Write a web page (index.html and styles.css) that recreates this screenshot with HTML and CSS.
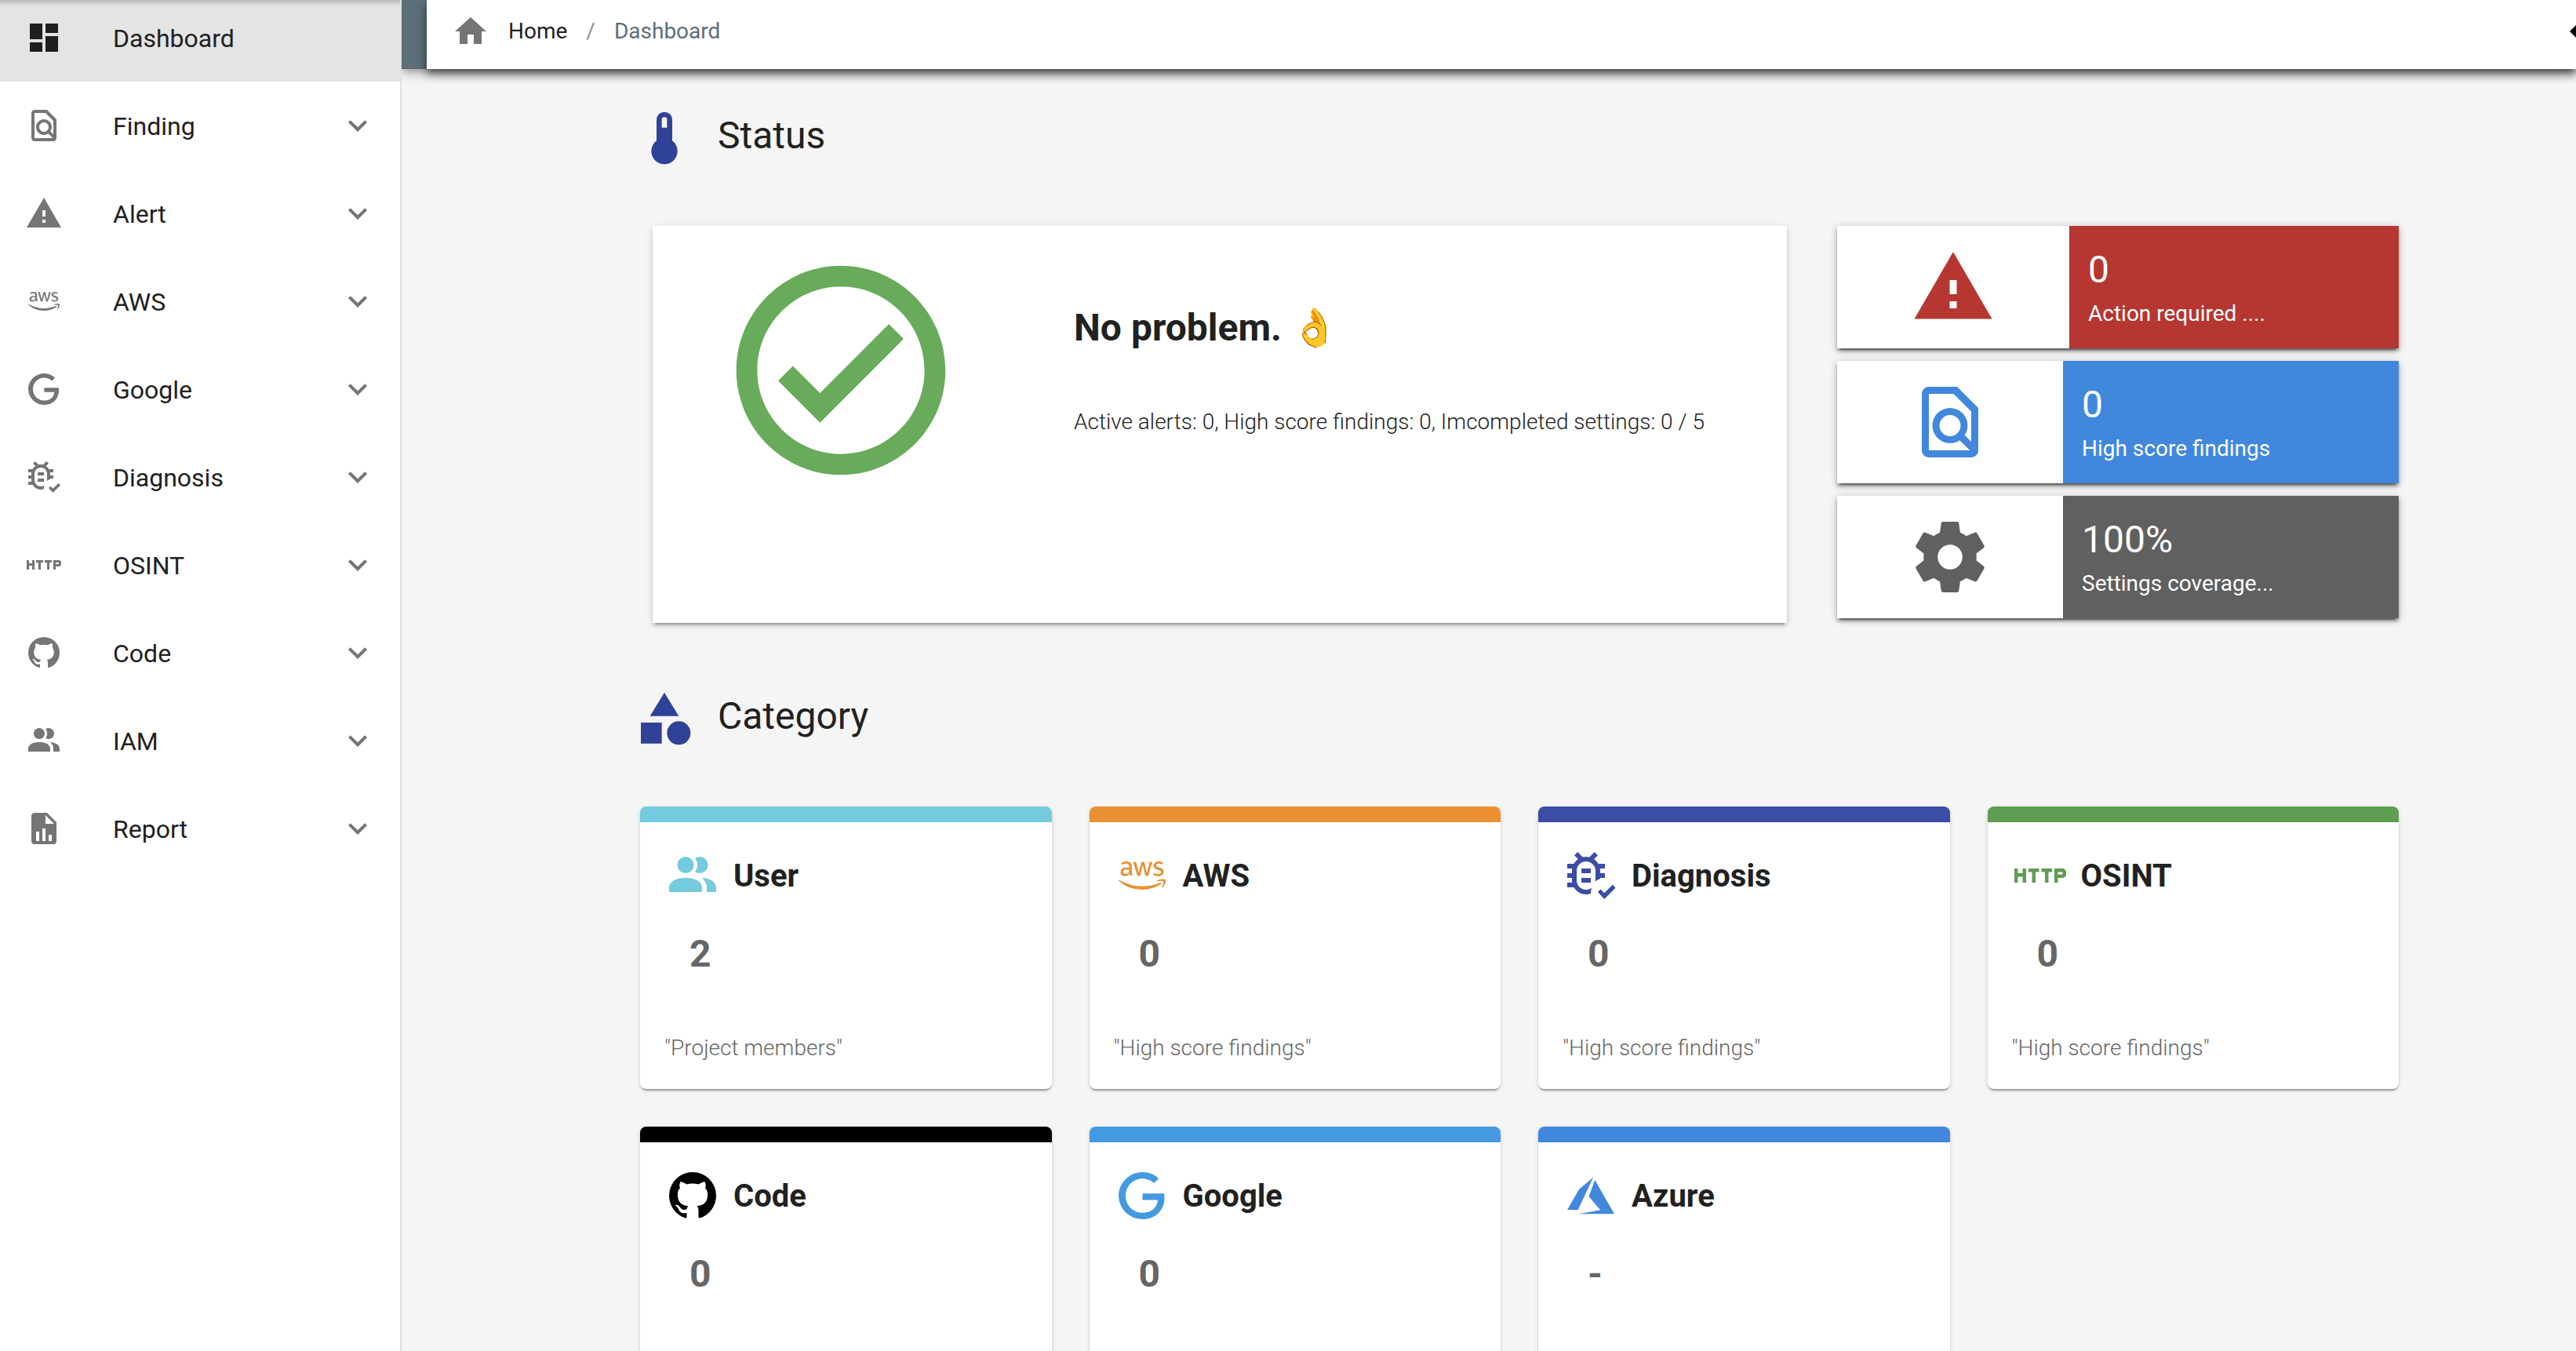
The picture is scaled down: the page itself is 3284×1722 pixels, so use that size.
FILE: index.html
```html
<!DOCTYPE html>
<html lang="en">
<head>
<meta charset="utf-8">
<meta name="viewport" content="width=device-width, initial-scale=1">
<title>Dashboard</title>
<link rel="stylesheet" href="styles.css">
</head>
<body>
<svg class="sprite" aria-hidden="true">
  <symbol id="i-dashboard" viewBox="0 0 24 24"><path d="M3 13h8V3H3v10zm0 8h8v-6H3v6zm10 0h8V11h-8v10zm0-18v6h8V3h-8z"/></symbol>
  <symbol id="i-finding" viewBox="0 0 24 24"><path d="M20 8l-6-6H6c-1.1 0-1.99.9-1.99 2L4 20c0 1.1.89 2 1.99 2H18c1.1 0 2-.9 2-2V8zM6 4h7l5 5v8.58l-1.84-1.84c1.28-1.94 1.07-4.57-.64-6.28C14.55 8.49 13.28 8 12 8c-1.28 0-2.55.49-3.53 1.46-1.95 1.95-1.95 5.11 0 7.05.97.97 2.25 1.46 3.53 1.46.96 0 1.92-.28 2.75-.83L17.6 20H6V4zm8.11 11.1c-.56.56-1.31.88-2.11.88s-1.55-.31-2.11-.88c-.56-.56-.88-1.31-.88-2.11s.31-1.55.88-2.11c.56-.57 1.31-.88 2.11-.88s1.55.31 2.11.88c.56.56.88 1.31.88 2.11s-.31 1.55-.88 2.11z"/></symbol>
  <symbol id="i-warning" viewBox="0 0 24 24"><path d="M1 21h22L12 2 1 21zm12-3h-2v-2h2v2zm0-4h-2v-4h2v4z"/></symbol>
  <symbol id="i-aws" viewBox="-64 -128 768 768"><path d="M180.41 203.01c-.72 22.65 10.6 32.68 10.88 39.05a8.164 8.164 0 0 1-4.1 6.27l-12.8 8.96a10.66 10.66 0 0 1-5.63 1.92c-.43-.02-8.19 1.83-20.48-25.61a78.608 78.608 0 0 1-62.61 29.45c-16.28.89-60.4-9.24-58.13-56.21-1.59-38.28 34.06-62.06 70.93-60.05 7.1.02 21.6.37 46.99 6.27v-15.62c2.69-26.46-14.7-46.99-44.81-43.91-2.4.01-19.4-.5-45.84 10.11-7.36 3.38-8.3 2.82-10.75 2.82-7.41 0-4.36-21.48-2.94-24.2 5.21-6.4 35.86-18.35 65.94-18.18a76.857 76.857 0 0 1 55.69 17.28 70.285 70.285 0 0 1 17.67 52.36l-.01 69.29zM93.99 235.4c32.43-.47 46.16-19.97 49.29-30.47 2.46-10.05 2.05-16.41 2.05-27.4-9.67-2.32-23.59-4.85-39.56-4.87-15.15-1.14-42.82 5.63-41.74 32.26-1.24 16.79 11.12 31.4 29.96 30.48zm170.92 23.05c-7.86.72-11.52-4.86-12.68-10.37l-49.8-164.65c-.97-2.78-1.61-5.65-1.92-8.58a4.61 4.61 0 0 1 3.86-5.25c.24-.04-2.13 0 22.25 0 8.78-.88 11.64 6.03 12.55 10.37l35.72 140.83 33.16-140.83c.53-3.22 2.94-11.07 12.8-10.24h17.16c2.17-.18 11.11-.5 12.68 10.37l33.42 142.63L420.98 80.1c.48-2.18 2.72-11.37 12.68-10.37h19.72c.85-.13 6.15-.81 5.25 8.58-.43 1.85 3.41-10.66-52.75 169.9-1.15 5.51-4.82 11.09-12.68 10.37h-18.69c-10.94 1.15-12.51-9.66-12.68-10.75L328.67 110.7l-32.78 136.99c-.16 1.09-1.73 11.9-12.68 10.75h-18.3zm273.48 5.63c-5.88.01-33.92-.3-57.36-12.29a12.802 12.802 0 0 1-7.81-11.91v-10.75c0-8.45 6.2-6.9 8.83-5.89 10.04 4.06 16.48 7.14 28.81 9.6 36.65 7.53 52.77-2.3 56.72-4.48 13.15-7.81 14.19-25.68 5.25-34.95-10.48-8.79-15.48-9.12-53.13-21-4.64-1.29-43.7-13.61-43.79-52.36-.61-28.24 25.05-56.18 69.52-55.95 12.67-.01 46.43 4.13 55.57 15.62 1.35 2.09 2.02 4.55 1.92 7.04v10.11c0 4.44-1.62 6.66-4.87 6.66-7.71-.86-21.39-11.17-49.16-10.75-6.89-.36-39.89.91-38.41 24.97-.43 18.96 26.61 26.07 29.7 26.89 36.46 10.97 48.65 12.79 63.12 29.58 17.14 22.25 7.9 48.3 4.35 55.44-19.08 37.49-68.42 34.44-69.26 34.42zm40.2 104.86c-70.03 51.72-171.69 79.25-258.49 79.25A469.127 469.127 0 0 1 2.83 327.46c-6.53-5.89-.77-13.96 7.17-9.47a637.37 637.37 0 0 0 316.88 84.12 630.22 630.22 0 0 0 241.59-49.55c11.78-5 21.77 7.8 10.12 16.38zm29.19-33.29c-8.96-11.52-59.28-5.38-81.81-2.69-6.79.77-7.94-5.12-1.79-9.47 40.07-28.17 105.88-20.1 113.44-10.63 7.55 9.47-2.05 75.41-39.56 106.91-5.76 4.87-11.27 2.3-8.71-4.1 8.44-21.25 27.39-68.49 18.43-80.02z"/></symbol>
  <symbol id="i-google" viewBox="0 0 24 24"><path d="M21.35 11.1h-9.17v2.73h6.51c-.33 3.81-3.5 5.44-6.5 5.44C8.36 19.27 5 16.25 5 12c0-4.1 3.2-7.27 7.2-7.27 3.09 0 4.9 1.97 4.9 1.97L19 4.72S16.56 2 12.1 2C6.42 2 2.03 6.8 2.03 12c0 5.05 4.13 10 10.22 10 5.35 0 9.25-3.67 9.25-9.09 0-1.15-.15-1.81-.15-1.81z"/></symbol>
  <symbol id="i-diagnosis" viewBox="0 0 24 24"><path d="M18 7H15.19C14.74 6.2 14.12 5.5 13.37 5L15 3.41L13.59 2L11.42 4.17C10.96 4.06 10.5 4 10 4S9.05 4.06 8.59 4.17L6.41 2L5 3.41L6.62 5C5.87 5.5 5.26 6.21 4.81 7H2V9H4.09C4.03 9.33 4 9.66 4 10V11H2V13H4V14C4 14.34 4.03 14.67 4.09 15H2V17H4.81C6.26 19.5 9.28 20.61 12 19.65C12 19.1 12.1 18.3 12.35 17.24C11.65 17.74 10.84 18 10 18C7.79 18 6 16.21 6 14V10C6 7.79 7.79 6 10 6S14 7.79 14 10V14C14 14.19 14 14.39 13.95 14.58C14.54 14 15.24 13.59 16 13.34V13H18V11H16V10C16 9.66 15.97 9.33 15.91 9H18V7zM12 9H8V11H12V9zM12 13H8V15H12V13zM17.75 22L15 19l1.16-1.16 1.59 1.59 3.59-3.59 1.16 1.41z"/></symbol>
  <symbol id="i-http" viewBox="0 0 24 24"><path d="M4.5 11h-2V9H1v6h1.5v-2.5h2V15H6V9H4.5v2zm2.5-.5h1.5V15H10v-4.5h1.5V9H7v1.5zm5.5 0H14V15h1.5v-4.5H17V9h-4.5v1.5zm9-1.5H18v6h1.5v-2h2c.8 0 1.5-.7 1.5-1.5v-1c0-.8-.7-1.5-1.5-1.5zm0 2.5h-2v-1h2v1z"/></symbol>
  <symbol id="i-github" viewBox="0 0 24 24"><path d="M12 2A10 10 0 0 0 2 12c0 4.42 2.87 8.17 6.84 9.5.5.08.66-.23.66-.5v-1.69c-2.77.6-3.36-1.34-3.36-1.34-.46-1.16-1.11-1.47-1.11-1.47-.91-.62.07-.6.07-.6 1 .07 1.53 1.03 1.53 1.03.87 1.52 2.34 1.07 2.91.83.09-.65.35-1.09.63-1.34-2.22-.25-4.55-1.11-4.55-4.92 0-1.11.38-2 1.03-2.71-.1-.25-.45-1.29.1-2.64 0 0 .84-.27 2.75 1.02.79-.22 1.65-.33 2.5-.33s1.71.11 2.5.33c1.91-1.29 2.75-1.02 2.75-1.02.55 1.35.2 2.39.1 2.64.65.71 1.03 1.6 1.03 2.71 0 3.82-2.34 4.66-4.57 4.91.36.31.69.92.69 1.85V21c0 .27.16.59.67.5C19.14 20.16 22 16.42 22 12A10 10 0 0 0 12 2z"/></symbol>
  <symbol id="i-people" viewBox="0 0 24 24"><path d="M16 17v2H2v-2s0-4 7-4 7 4 7 4m-3.5-9.5A3.5 3.5 0 1 0 9 11a3.5 3.5 0 0 0 3.5-3.5m3.44 5.5A5.32 5.32 0 0 1 18 17v2h4v-2s0-3.63-6.06-4M15 4a3.39 3.39 0 0 0-1.93.59 5 5 0 0 1 0 5.82A3.39 3.39 0 0 0 15 11a3.5 3.5 0 0 0 0-7z"/></symbol>
  <symbol id="i-report" viewBox="0 0 24 24"><path d="M13 9h5.5L13 3.5V9M6 2h8l6 6v12a2 2 0 0 1-2 2H6a2 2 0 0 1-2-2V4c0-1.11.89-2 2-2m1 18h2v-6H7v6m4 0h2v-8h-2v8m4 0h2v-4h-2v4z"/></symbol>
  <symbol id="i-expand" viewBox="0 0 24 24"><path d="M16.59 8.59L12 13.17 7.41 8.59 6 10l6 6 6-6z"/></symbol>
  <symbol id="i-home" viewBox="0 0 24 24"><path d="M10 20v-6h4v6h5v-8h3L12 3 2 12h3v8z"/></symbol>
  <symbol id="i-thermometer" viewBox="0 0 24 24"><path d="M15 13V5a3 3 0 0 0-6 0v8a5 5 0 1 0 6 0m-3-9a1 1 0 0 1 1 1v3h-2V5a1 1 0 0 1 1-1z"/></symbol>
  <symbol id="i-category" viewBox="0 0 24 24"><path d="M12 2l-5.5 9h11zM3 13.5h8v8H3z"/><circle cx="17.5" cy="17.5" r="4.5"/></symbol>
  <symbol id="i-check" viewBox="0 0 24 24"><path d="M12 2C6.5 2 2 6.5 2 12S6.5 22 12 22 22 17.5 22 12 17.5 2 12 2M12 20C7.59 20 4 16.41 4 12S7.59 4 12 4 20 7.59 20 12 16.41 20 12 20M16.59 7.58L10 14.17L7.41 11.59L6 13L10 17L18 9L16.59 7.58Z"/></symbol>
  <symbol id="i-cog" viewBox="0 0 24 24"><path d="M12 15.5A3.5 3.5 0 0 1 8.5 12 3.5 3.5 0 0 1 12 8.5a3.5 3.5 0 0 1 3.5 3.5 3.5 3.5 0 0 1-3.5 3.5m7.43-2.53c.04-.32.07-.64.07-.97s-.03-.66-.07-1l2.11-1.63c.19-.15.24-.42.12-.64l-2-3.46c-.12-.22-.39-.31-.61-.22l-2.49 1c-.52-.39-1.06-.73-1.69-.98l-.37-2.65A.506.506 0 0 0 14 2h-4c-.25 0-.46.18-.5.42l-.37 2.65c-.63.25-1.17.59-1.69.98l-2.49-1c-.22-.09-.49 0-.61.22l-2 3.46c-.13.22-.07.49.12.64L4.57 11c-.04.34-.07.67-.07 1s.03.65.07.97l-2.11 1.66c-.19.15-.25.42-.12.64l2 3.46c.12.22.39.3.61.22l2.49-1.01c.52.4 1.06.74 1.69.99l.37 2.65c.04.24.25.42.5.42h4c.25 0 .46-.18.5-.42l.37-2.65c.63-.26 1.17-.59 1.69-.99l2.49 1.01c.22.08.49 0 .61-.22l2-3.46c.12-.22.07-.49-.12-.64z"/></symbol>
  <symbol id="i-azure" viewBox="0 0 24 24"><path d="M13.05 4.24L6.56 18.05 2 18l5.09-8.76 5.96-5m.7 1.13L22 19.76H6.74l9.3-1.66-4.87-5.79 2.58-6.94z"/></symbol>
  <symbol id="i-arrow" viewBox="0 0 8 16"><path d="M8 0L0 8l8 8z"/></symbol>
</svg>

<div class="layout">
  <aside class="sidebar">
    <nav class="nav" aria-label="Main">
      <a class="nav-item nav-item--active" href="#" aria-current="page"><svg class="icon"><use href="#i-dashboard"/></svg><span class="nav-label">Dashboard</span></a>
      <button class="nav-item" type="button" aria-expanded="false"><svg class="icon"><use href="#i-finding"/></svg><span class="nav-label">Finding</span><svg class="icon"><use href="#i-expand"/></svg></button>
      <button class="nav-item" type="button" aria-expanded="false"><svg class="icon"><use href="#i-warning"/></svg><span class="nav-label">Alert</span><svg class="icon"><use href="#i-expand"/></svg></button>
      <button class="nav-item" type="button" aria-expanded="false"><svg class="icon"><use href="#i-aws"/></svg><span class="nav-label">AWS</span><svg class="icon"><use href="#i-expand"/></svg></button>
      <button class="nav-item" type="button" aria-expanded="false"><svg class="icon"><use href="#i-google"/></svg><span class="nav-label">Google</span><svg class="icon"><use href="#i-expand"/></svg></button>
      <button class="nav-item" type="button" aria-expanded="false"><svg class="icon"><use href="#i-diagnosis"/></svg><span class="nav-label">Diagnosis</span><svg class="icon"><use href="#i-expand"/></svg></button>
      <button class="nav-item" type="button" aria-expanded="false"><svg class="icon"><use href="#i-http"/></svg><span class="nav-label">OSINT</span><svg class="icon"><use href="#i-expand"/></svg></button>
      <button class="nav-item" type="button" aria-expanded="false"><svg class="icon"><use href="#i-github"/></svg><span class="nav-label">Code</span><svg class="icon"><use href="#i-expand"/></svg></button>
      <button class="nav-item" type="button" aria-expanded="false"><svg class="icon"><use href="#i-people"/></svg><span class="nav-label">IAM</span><svg class="icon"><use href="#i-expand"/></svg></button>
      <button class="nav-item" type="button" aria-expanded="false"><svg class="icon"><use href="#i-report"/></svg><span class="nav-label">Report</span><svg class="icon"><use href="#i-expand"/></svg></button>
    </nav>
  </aside>

  <div class="page">
    <header class="appbar">
      <div class="toolbar">
        <nav class="breadcrumb" aria-label="Breadcrumb">
          <svg class="icon crumb-icon"><use href="#i-home"/></svg>
          <a class="crumb" href="#">Home</a>
          <span class="crumb-sep">/</span>
          <span class="crumb crumb--current">Dashboard</span>
        </nav>
        <svg class="toolbar-arrow" aria-hidden="true"><use href="#i-arrow"/></svg>
      </div>
    </header>

    <main class="content">
      <section>
        <div class="section-head">
          <svg class="section-icon"><use href="#i-thermometer"/></svg>
          <h2 class="section-title">Status</h2>
        </div>
        <div class="status-row">
          <div class="status-card">
            <svg class="status-icon"><use href="#i-check"/></svg>
            <div class="status-text">
              <h3 class="status-title">No problem. 👌</h3>
              <p class="status-detail">Active alerts: 0, High score findings: 0, Imcompleted settings: 0 / 5</p>
            </div>
          </div>
          <div class="tiles">
            <div class="tile tile--alert">
              <div class="tile-icon"><svg><use href="#i-warning"/></svg></div>
              <div class="tile-body"><p class="tile-value">0</p><p class="tile-label">Action required ....</p></div>
            </div>
            <div class="tile tile--finding">
              <div class="tile-icon"><svg><use href="#i-finding"/></svg></div>
              <div class="tile-body"><p class="tile-value">0</p><p class="tile-label">High score findings</p></div>
            </div>
            <div class="tile tile--settings">
              <div class="tile-icon"><svg><use href="#i-cog"/></svg></div>
              <div class="tile-body"><p class="tile-value">100%</p><p class="tile-label">Settings coverage...</p></div>
            </div>
          </div>
        </div>
      </section>

      <section>
        <div class="section-head">
          <svg class="section-icon"><use href="#i-category"/></svg>
          <h2 class="section-title">Category</h2>
        </div>
        <div class="cards">
          <article class="card card--user">
            <div class="card-head"><svg class="card-icon"><use href="#i-people"/></svg><h3 class="card-title">User</h3></div>
            <p class="card-value">2</p>
            <p class="card-note">"Project members"</p>
          </article>
          <article class="card card--aws">
            <div class="card-head"><svg class="card-icon"><use href="#i-aws"/></svg><h3 class="card-title">AWS</h3></div>
            <p class="card-value">0</p>
            <p class="card-note">"High score findings"</p>
          </article>
          <article class="card card--diagnosis">
            <div class="card-head"><svg class="card-icon"><use href="#i-diagnosis"/></svg><h3 class="card-title">Diagnosis</h3></div>
            <p class="card-value">0</p>
            <p class="card-note">"High score findings"</p>
          </article>
          <article class="card card--osint">
            <div class="card-head"><svg class="card-icon"><use href="#i-http"/></svg><h3 class="card-title">OSINT</h3></div>
            <p class="card-value">0</p>
            <p class="card-note">"High score findings"</p>
          </article>
          <article class="card card--code">
            <div class="card-head"><svg class="card-icon"><use href="#i-github"/></svg><h3 class="card-title">Code</h3></div>
            <p class="card-value">0</p>
            <p class="card-note">"High score findings"</p>
          </article>
          <article class="card card--google">
            <div class="card-head"><svg class="card-icon"><use href="#i-google"/></svg><h3 class="card-title">Google</h3></div>
            <p class="card-value">0</p>
            <p class="card-note">"High score findings"</p>
          </article>
          <article class="card card--azure">
            <div class="card-head"><svg class="card-icon"><use href="#i-azure"/></svg><h3 class="card-title">Azure</h3></div>
            <p class="card-value">-</p>
            <p class="card-note">"High score findings"</p>
          </article>
        </div>
      </section>
    </main>
  </div>
</div>
</body>
</html>
```
FILE: styles.css
```css
* {
  box-sizing: border-box;
}

body {
  margin: 0;
  font-family: Roboto, "Noto Color Emoji", sans-serif;
  font-size: 32px;
  color: #212121;
  background: #f5f5f5;
}

h2,
h3,
p {
  margin: 0;
}

svg {
  display: block;
  flex: none;
  fill: currentColor;
}

.sprite {
  display: none;
}

.layout {
  display: flex;
  height: 100vh;
  overflow: hidden;
}

.icon {
  width: 48px;
  height: 48px;
}

/* Sidebar */
.sidebar {
  position: relative;
  flex: none;
  width: 512px;
  background: #fff;
  border-right: 2px solid #e0e0e0;
  overflow: hidden;
}

.sidebar::before {
  content: "";
  position: absolute;
  inset: 0 0 auto;
  height: 8px;
  background: linear-gradient(rgba(0, 0, 0, 0.2), rgba(0, 0, 0, 0));
}

.nav {
  display: flex;
  flex-direction: column;
  margin-top: -8px;
}

.nav-item {
  display: flex;
  align-items: center;
  gap: 64px;
  height: 112px;
  padding: 0 30px 0 32px;
  border: 0;
  background: none;
  color: #757575;
  font: inherit;
  text-align: left;
  text-decoration: none;
  cursor: pointer;
}

.nav-item--active {
  background: #e4e4e4;
  color: #1f1f1f;
}

.nav-label {
  flex: 1;
  padding-top: 2px;
  line-height: 48px;
  color: #212121;
}

/* Top bar */
.page {
  display: flex;
  flex: 1;
  flex-direction: column;
  min-width: 0;
}

.appbar {
  position: relative;
  z-index: 1;
  flex: none;
  padding-left: 32px;
  background: #5b6e79;
  box-shadow: 0 4px 8px -2px rgba(0, 0, 0, 0.2), 0 8px 10px 0 rgba(0, 0, 0, 0.14), 0 2px 20px 0 rgba(0, 0, 0, 0.12);
  clip-path: inset(0 0 -40px 0);
}

.toolbar {
  display: flex;
  align-items: center;
  justify-content: space-between;
  height: 88px;
  padding: 0 0 8px 32px;
  background: #fff;
  box-shadow: 0 4px 8px -2px rgba(0, 0, 0, 0.4), 0 8px 10px 0 rgba(0, 0, 0, 0.28), 0 2px 20px 0 rgba(0, 0, 0, 0.12);
}

.breadcrumb {
  display: flex;
  align-items: center;
  font-size: 28px;
  line-height: 42px;
}

.crumb-icon {
  margin-right: 24px;
  color: #757575;
}

.crumb {
  color: #212121;
  text-decoration: none;
}

.crumb--current {
  color: #5b6f7b;
}

.crumb-sep {
  margin: 0 24px;
  color: #8f8f8f;
}

.toolbar-arrow {
  width: 8px;
  height: 16px;
  color: #000;
}

/* Content */
.content {
  flex: 1;
  min-height: 0;
  padding: 48px 226px 48px 295px;
  overflow-y: auto;
  scrollbar-width: none;
}

.section-head {
  display: flex;
  gap: 28px;
  margin-bottom: 72px;
}

.section-icon {
  width: 80px;
  height: 80px;
  color: #304297;
}

.section-title {
  font-size: 48px;
  font-weight: 400;
  line-height: 74px;
}

.status-row {
  display: grid;
  grid-template-columns: 1446fr 716fr;
  gap: 64px;
  align-items: start;
  margin-bottom: 82px;
  padding-left: 25px;
}

.status-card {
  display: flex;
  gap: 137px;
  min-height: 506px;
  padding: 24px 80px;
  background: #fff;
  box-shadow: 0 6px 2px -4px rgba(0, 0, 0, 0.2), 0 4px 4px 0 rgba(0, 0, 0, 0.14), 0 2px 10px 0 rgba(0, 0, 0, 0.12);
}

.status-icon {
  width: 320px;
  height: 320px;
  color: #68ab5b;
}

.status-text {
  display: flex;
  flex-direction: column;
  gap: 64px;
  padding-top: 74px;
}

.status-title {
  font-size: 48px;
  font-weight: 700;
  line-height: 64px;
}

.status-detail {
  font-size: 28px;
  font-weight: 300;
  line-height: 48px;
}

.tiles {
  display: grid;
  gap: 16px;
}

.tile {
  display: grid;
  grid-template-columns: 288px 1fr;
  background: #fff;
  box-shadow: 0 6px 2px -4px rgba(0, 0, 0, 0.4), 0 4px 4px 0 rgba(0, 0, 0, 0.28), 0 2px 10px 0 rgba(0, 0, 0, 0.24);
}

.tile-icon {
  display: grid;
  place-items: center;
  color: var(--tone);
}

.tile-icon svg {
  width: 108px;
  height: 108px;
}

.tile-body {
  padding: 24px 24px 20px;
  background: var(--tone);
  color: #fff;
}

.tile-value {
  font-size: 48px;
  line-height: 64px;
}

.tile-label {
  font-size: 28px;
  line-height: 48px;
}

.tile--alert {
  --tone: #b63732;
  grid-template-columns: 296px 1fr;
}

.tile--finding {
  --tone: #4188dd;
}

.tile--settings {
  --tone: #606060;
}

.cards {
  display: grid;
  grid-template-columns: repeat(4, 1fr);
  gap: 48px;
  padding-left: 9px;
}

.card {
  padding: 32px 32px 32px 31px;
  border-top: 20px solid var(--tone);
  border-radius: 8px;
  background: #fff;
  box-shadow: 0 4px 2px -2px rgba(0, 0, 0, 0.2), 0 2px 2px 0 rgba(0, 0, 0, 0.14), 0 2px 6px 0 rgba(0, 0, 0, 0.12);
}

.card-head {
  display: flex;
  align-items: center;
  gap: 16px;
}

.card-icon {
  width: 72px;
  height: 72px;
  color: var(--tone);
}

.card-title {
  padding-top: 2px;
  font-size: 40px;
  font-weight: 700;
  line-height: 64px;
}

.card-value {
  margin: 32px 0 68px 32px;
  font-size: 48px;
  font-weight: 700;
  line-height: 64px;
  color: #666;
}

.card-note {
  font-size: 28px;
  font-weight: 300;
  line-height: 40px;
  color: #666;
}

.card--user { --tone: #74cbdd; }
.card--aws { --tone: #ea9033; }
.card--diagnosis { --tone: #3c4da5; }
.card--osint { --tone: #5e9d52; }
.card--code { --tone: #000; }
.card--google { --tone: #449ae0; }
.card--azure { --tone: #4188dd; }
```
